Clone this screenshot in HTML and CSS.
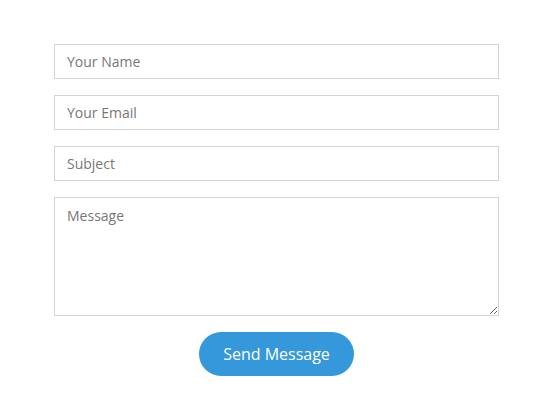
FILE: index.html
```html
<!DOCTYPE html>
<html>
<head>
<meta charset="utf-8">
<link rel="stylesheet" href="styles.css">
</head>
<body>
<form class="contact">
  <input class="field" type="text" placeholder="Your Name">
  <input class="field" type="email" placeholder="Your Email">
  <input class="field" type="text" placeholder="Subject">
  <textarea class="field message" placeholder="Message"></textarea>
  <div class="actions">
    <button class="send" type="button">Send Message</button>
  </div>
</form>
</body>
</html>
```
FILE: styles.css
```css
html, body {
  margin: 0;
  background: #fff;
}
body {
  font-family: "Open Sans", sans-serif;
}
.contact {
  width: 445px;
  margin: 44px 0 0 54px;
  display: flex;
  flex-direction: column;
  gap: 16px;
}
.field {
  box-sizing: border-box;
  width: 445px;
  height: 35px;
  margin: 0;
  padding: 0 12px;
  border: 1px solid #d4d4d4;
  border-radius: 0;
  font-family: "Open Sans", sans-serif;
  font-size: 14px;
  color: #555;
  background: #fff;
  outline: none;
}
.field::placeholder {
  color: #777;
}
.message {
  height: 119px;
  padding: 8px 12px;
  resize: vertical;
}
.actions {
  display: flex;
  justify-content: center;
}
.send {
  width: 155px;
  height: 44px;
  border: none;
  border-radius: 22px;
  background: #3498db;
  color: #fff;
  font-family: "Open Sans", sans-serif;
  font-size: 16px;
  font-weight: 500;
  padding: 0;
}
```
